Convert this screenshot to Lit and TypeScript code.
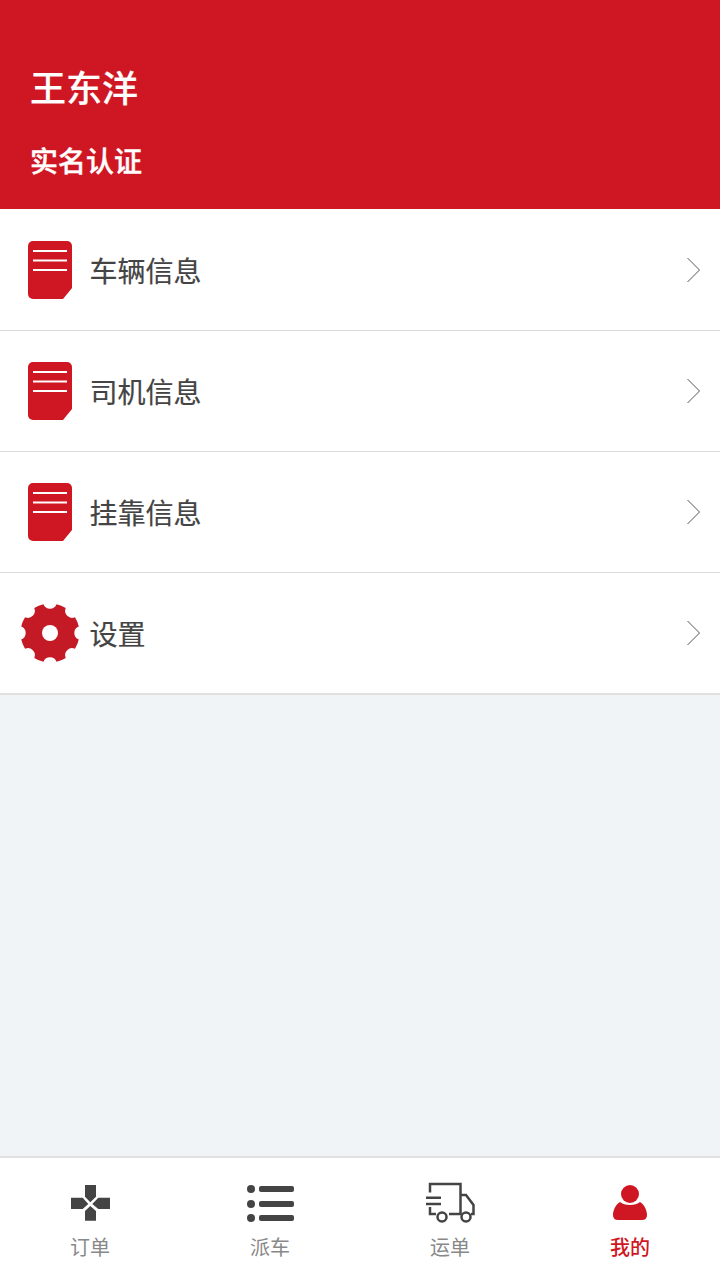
import { LitElement, html, css, svg } from "lit";
import { customElement } from "lit/decorators.js";

const doc = svg`<svg class="ic" width="44" height="58" viewBox="0 0 44 58"><path d="M5 0H39A5 5 0 0 1 44 5V47L35 58H5A5 5 0 0 1 0 53V5A5 5 0 0 1 5 0Z" fill="#cf1723"/><path d="M5 10H39M5 19.500H39M5 29H39" stroke="#fff" stroke-width="2" fill="none"/></svg>`;

const gearPath = (() => {
  let d = "";
  const n = 8;
  const cx = 30, cy = 30, R = 29.5;
  for (let i = 0; i < n; i++) {
    const a = (i * 2 * Math.PI) / n - Math.PI / 2 + Math.PI / 8;
    const pt = (ang: number, rad: number) => `${(cx + rad * Math.cos(ang)).toFixed(2)} ${(cy + rad * Math.sin(ang)).toFixed(2)}`;
    const w = 0.17;
    const next = a + (2 * Math.PI) / n - w;
    d += `${i === 0 ? "M" : "L"}${pt(a - w, R)} A${R} ${R} 0 0 1 ${pt(a + w, R)} A7 7 0 0 0 ${pt(next, R)} `;
  }
  return d + "Z";
})();

const gear = svg`<svg class="ic" width="60" height="60" viewBox="0 0 60 60"><path d="${gearPath}" fill="#c41a25"/><circle cx="30" cy="30" r="8" fill="#fff"/></svg>`;

const chevron = svg`<svg width="13" height="26" viewBox="0 0 13 26"><path d="M.5 1L12.500 13L.5 25" stroke="#555" stroke-width="1" fill="none"/></svg>`;

const dpad = svg`<svg width="39" height="36" viewBox="0 0 39 36"><path fill="#444" d="M14 0H25V11.700L19.300 17.300L14 11.700ZM14 35.700H25V26L19.300 21L14 26ZM0 12.700H11.700L17.300 19L11.700 24H0ZM39 12.700H27.300L21.300 19L27.300 24H39Z"/></svg>`;

const list = svg`<svg width="47" height="37" viewBox="0 0 47 37"><g fill="#444"><circle cx="4" cy="4" r="4"/><circle cx="4" cy="19" r="4"/><circle cx="4" cy="33" r="4"/><rect x="12" y="1" width="35" height="6" rx="2"/><rect x="12" y="16" width="35" height="6" rx="2"/><rect x="12" y="30" width="35" height="6" rx="2"/></g></svg>`;

const truck = svg`<svg width="50" height="42" viewBox="0 0 50 42"><g fill="none" stroke="#444" stroke-width="2.500"><path d="M5 10.500V2H35.500V32H24"/><path d="M5 25V32H11"/><path d="M35.500 13H41L48.500 23V32H46"/><path d="M1 15.700H16M1 22H16"/><circle cx="17" cy="35" r="4.500"/><circle cx="41" cy="35" r="4.500"/></g></svg>`;

const person = svg`<svg width="34" height="36" viewBox="0 0 34 36"><g fill="#cf1723"><circle cx="17" cy="9" r="9"/><path d="M7 17C11 21 23 21 27 17C31 19 34 25 34 30Q34 35 29 35H5Q0 35 0 30C0 25 3 19 7 17Z"/></g></svg>`;

@customElement("app-root")
export class AppRoot extends LitElement {
  static styles = css`
    :host {
      display: flex;
      flex-direction: column;
      height: 1280px;
      background: #f0f4f7;
      font-family: "Noto Sans CJK SC", "Noto Sans", sans-serif;
    }
    .head {
      height: 209px;
      box-sizing: border-box;
      background: #cf1723;
      color: #fff;
      padding: 60px 30px 0;
      flex: none;
    }
    .name {
      font-size: 36px;
      line-height: 52px;
      font-weight: 500;
      -webkit-text-stroke: 0.2px #fff;
    }
    .auth {
      font-size: 28px;
      line-height: 40px;
      font-weight: 500;
      margin-top: 28px;
      -webkit-text-stroke: 0.4px #fff;
    }
    .menu {
      background: #fff;
      flex: none;
      padding-top: 1px;
    }
    .row {
      height: 121px;
      box-sizing: border-box;
      display: flex;
      align-items: center;
      padding: 0 20px;
      border-bottom: 1px solid #dcdcdc;
      color: #444;
    }
    .row:last-child {
      height: 122px;
      border-bottom: 2px solid #e0e0e0;
    }
    .slot {
      width: 60px;
      display: flex;
      justify-content: center;
      margin-right: 10px;
    }
    .ic { display: block; }
    .label {
      flex: 1;
      font-size: 28px;
      line-height: 40px;
      font-weight: 400;
      margin-left: -0.5px;
      -webkit-text-stroke: 0.2px #444;
    }
    .chev { display: flex; }
    .spacer { flex: 1; }
    .tabs {
      height: 124px;
      box-sizing: border-box;
      flex: none;
      background: #fff;
      border-top: 2px solid #e0e0e0;
      display: flex;
    }
    .tab {
      flex: 1;
      display: flex;
      flex-direction: column;
      align-items: center;
      color: #888;
      font-size: 20px;
      line-height: 32px;
    }
    .tab.on { color: #cf1723; font-weight: 500; }
    .tabic {
      height: 73px;
      padding-top: 17px;
      display: flex;
      align-items: center;
      justify-content: center;
      box-sizing: border-box;
    }
  `;

  render() {
    const rows = [
      ["车辆信息", doc],
      ["司机信息", doc],
      ["挂靠信息", doc],
      ["设置", gear],
    ] as const;
    const tabs = [
      ["订单", dpad],
      ["派车", list],
      ["运单", truck],
      ["我的", person],
    ] as const;
    return html`
      <div class="head">
        <div class="name">王东洋</div>
        <div class="auth">实名认证</div>
      </div>
      <div class="menu">
        ${rows.map(
          ([t, i]) => html`<div class="row">
            <div class="slot">${i}</div>
            <div class="label">${t}</div>
            <div class="chev">${chevron}</div>
          </div>`
        )}
      </div>
      <div class="spacer"></div>
      <div class="tabs">
        ${tabs.map(
          ([t, i], idx) => html`<div class="tab ${idx === 3 ? "on" : ""}">
            <div class="tabic">${i}</div>
            <div>${t}</div>
          </div>`
        )}
      </div>
    `;
  }
}
